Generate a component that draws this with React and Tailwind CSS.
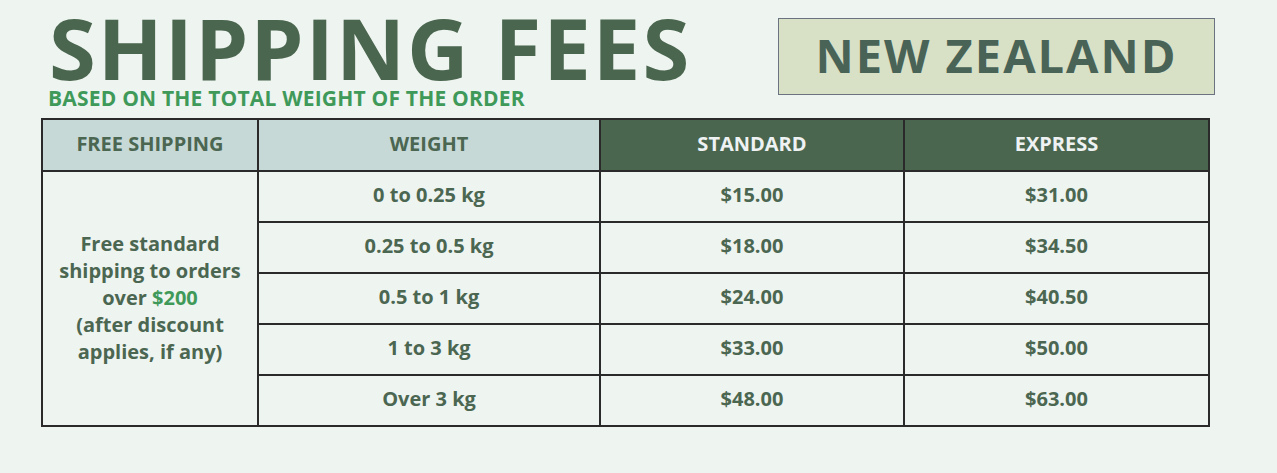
const rows = [
  { weight: '0 to 0.25 kg', standard: '$15.00', express: '$31.00' },
  { weight: '0.25 to 0.5 kg', standard: '$18.00', express: '$34.50' },
  { weight: '0.5 to 1 kg', standard: '$24.00', express: '$40.50' },
  { weight: '1 to 3 kg', standard: '$33.00', express: '$50.00' },
  { weight: 'Over 3 kg', standard: '$48.00', express: '$63.00' },
];

const App = () => {
  return (
    <div className="w-[1277px] h-[473px] bg-[#eef4f0] text-[#4b6651] font-['Open_Sans',sans-serif] overflow-hidden">
      <div className="flex justify-between pl-[48px] pr-[62px]">
        <div className="pt-[4px]">
          <h1 className="text-[85px] leading-[86px] font-bold tracking-[2px] text-[#4a664e] pl-[1px] whitespace-nowrap">
            SHIPPING FEES
          </h1>
          <p className="text-[21px] leading-[22px] font-bold tracking-[0.2px] text-[#3f9a5a] mt-[-3px]">
            BASED ON THE TOTAL WEIGHT OF THE ORDER
          </p>
        </div>
        <div className="mt-[18px] w-[437px] h-[77px] bg-[#d8e0c6] border border-[#6b7280] flex items-center justify-center pb-[3px]">
          <span className="text-[47px] font-bold tracking-[2px] text-[#4a6357] whitespace-nowrap">NEW ZEALAND</span>
        </div>
      </div>

      <table className="ml-[41px] mt-[9px] border-collapse text-[20px] font-bold text-center">
        <thead>
          <tr className="h-[52px]">
            <th className="w-[216px] bg-[#c6d9d6] border-2 border-[#2a2a2a] text-[#4b6651] pb-[3px]">FREE SHIPPING</th>
            <th className="w-[342px] bg-[#c6d9d6] border-2 border-[#2a2a2a] text-[#4b6651] pb-[3px]">WEIGHT</th>
            <th className="w-[304px] bg-[#4a664e] border-2 border-[#2a2a2a] text-[#eef2f3] pb-[3px]">STANDARD</th>
            <th className="w-[305px] bg-[#4a664e] border-2 border-[#2a2a2a] text-[#eef2f3] pb-[3px]">EXPRESS</th>
          </tr>
        </thead>
        <tbody>
          {rows.map((r, i) => (
            <tr key={r.weight} className="h-[51px]">
              {i === 0 && (
                <td rowSpan={5} className="border-2 border-[#2a2a2a] leading-[27px] px-2 pb-[3px]">
                  Free standard shipping to orders over <span className="text-[#3f9a5a]">$200</span>
                  <br />
                  (after discount applies, if any)
                </td>
              )}
              <td className="border-2 border-[#2a2a2a] pb-[3px]">{r.weight}</td>
              <td className="border-2 border-[#2a2a2a] pb-[3px]">{r.standard}</td>
              <td className="border-2 border-[#2a2a2a] pb-[3px]">{r.express}</td>
            </tr>
          ))}
        </tbody>
      </table>
    </div>
  );
};

export default App;
